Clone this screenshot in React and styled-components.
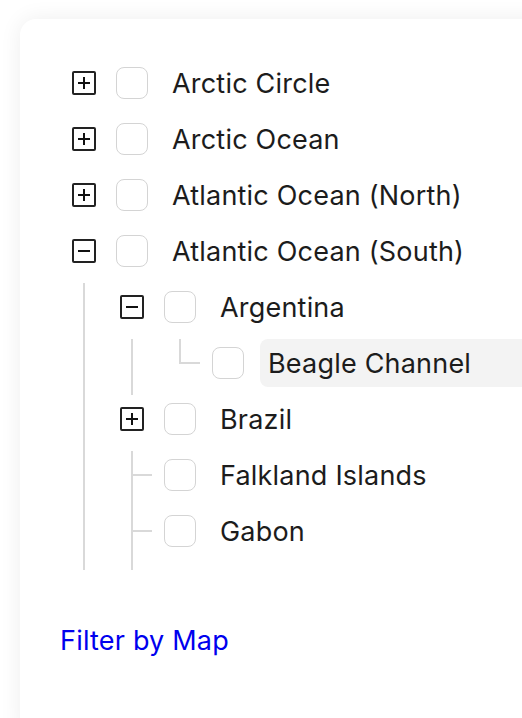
import React from "react";
import styled, { createGlobalStyle } from "styled-components";

const GlobalStyle = createGlobalStyle`
  html, body {
    margin: 0;
    padding: 0;
    background: #fff;
    overflow: hidden;
  }
  body {
    font-family: Inter, "Noto Sans", sans-serif;
  }
`;

const Page = styled.div`
  padding: 19px 0 0 20px;
`;

const Card = styled.div`
  width: 600px;
  min-height: 720px;
  box-sizing: border-box;
  padding: 36px 0 0 40px;
  background: #fff;
  border-radius: 16px;
  box-shadow: 0 0 22px rgba(0, 0, 0, 0.07);
`;

const TreeList = styled.div`
  padding-left: 12px;
  height: 515px;
  overflow: hidden;
`;

const Row = styled.div`
  display: flex;
  align-items: center;
  height: 56px;
`;

const Indent = styled.span`
  position: relative;
  align-self: stretch;
  width: 48px;
  flex-shrink: 0;

  &::before {
    content: "";
    display: ${(p) => (p.$line ? "block" : "none")};
    position: absolute;
    left: 11px;
    top: 4px;
    bottom: -4px;
    width: 2px;
    background: #d9d9d9;
  }
`;

const Switcher = styled.span`
  position: relative;
  align-self: stretch;
  width: 24px;
  margin-right: 20px;
  flex-shrink: 0;
  display: flex;
  align-items: center;
  justify-content: center;
`;

const LeafLine = styled.span`
  &::before {
    content: "";
    position: absolute;
    left: 11px;
    top: 4px;
    bottom: ${(p) => (p.$last ? "calc(50% - 1px)" : "-4px")};
    width: 2px;
    background: #d9d9d9;
  }
  &::after {
    content: "";
    position: absolute;
    left: 11px;
    top: calc(50% - 1px);
    width: 21px;
    height: 2px;
    background: #d9d9d9;
  }
`;

const Toggle = styled.span`
  position: relative;
  width: 24px;
  height: 24px;
  box-sizing: border-box;
  border: 2px solid #222;
  border-radius: 2px;

  &::before {
    content: "";
    position: absolute;
    left: 4px;
    right: 4px;
    top: 9px;
    height: 2px;
    background: #111;
  }
  &::after {
    content: "";
    display: ${(p) => (p.$open ? "none" : "block")};
    position: absolute;
    top: 4px;
    bottom: 4px;
    left: 9px;
    width: 2px;
    background: #111;
  }
`;

const Checkbox = styled.span`
  width: 32px;
  height: 32px;
  box-sizing: border-box;
  border: 1.5px solid #d4d4d4;
  border-radius: 8px;
  background: #fff;
  flex-shrink: 0;
`;

const Title = styled.span`
  flex: 1;
  display: flex;
  align-items: center;
  height: 48px;
  margin-left: 16px;
  padding: 0 8px;
  border-radius: 8px;
  background: ${(p) => (p.$selected ? "#f3f3f3" : "transparent")};
  font-size: 27px;
  letter-spacing: 0.2px;
  color: #1c1c1c;
  white-space: nowrap;
`;

const MapLink = styled.a`
  display: inline-block;
  margin-top: 55px;
  font-size: 27px;
  line-height: 32px;
  letter-spacing: 0.2px;
  color: #0000ee;
  text-decoration: none;
  cursor: pointer;
`;

const regions = [
  { title: "Arctic Circle", children: [{ title: "Svalbard" }] },
  { title: "Arctic Ocean", children: [{ title: "Greenland Sea" }] },
  { title: "Atlantic Ocean (North)", children: [{ title: "Azores" }] },
  {
    title: "Atlantic Ocean (South)",
    open: true,
    children: [
      {
        title: "Argentina",
        open: true,
        children: [{ title: "Beagle Channel", selected: true }],
      },
      { title: "Brazil", children: [{ title: "Rio de Janeiro" }] },
      { title: "Falkland Islands" },
      { title: "Gabon" },
      { title: "Namibia" },
    ],
  },
  { title: "Baltic Sea", children: [{ title: "Gulf of Bothnia" }] },
];

const VISIBLE_ROWS = 9;

// walk the tree, remembering for each depth whether the ancestor has siblings below
function flatten(nodes, lines = []) {
  const rows = [];
  nodes.forEach((node, i) => {
    const last = i === nodes.length - 1;
    rows.push({ node, lines, last });
    if (node.open && node.children) {
      rows.push(...flatten(node.children, [...lines, !last]));
    }
  });
  return rows;
}

// peek = the row just under the fold, only its guide lines show
function TreeRow({ node, lines, last, peek }) {
  const hasChildren = !!node.children;
  return (
    <Row>
      {lines.map((line, i) => (
        <Indent key={i} $line={line} />
      ))}
      <Switcher>
        {hasChildren ? <Toggle $open={node.open} /> : <LeafLine $last={last} />}
      </Switcher>
      {!peek && <Checkbox />}
      {!peek && <Title $selected={node.selected}>{node.title}</Title>}
    </Row>
  );
}

export default function App() {
  const rows = flatten(regions).slice(0, VISIBLE_ROWS + 1);
  return (
    <Page>
      <GlobalStyle />
      <Card>
        <TreeList>
          {rows.map((r, i) => (
            <TreeRow key={i} {...r} peek={i === VISIBLE_ROWS} />
          ))}
        </TreeList>
        <MapLink>Filter by Map</MapLink>
      </Card>
    </Page>
  );
}
